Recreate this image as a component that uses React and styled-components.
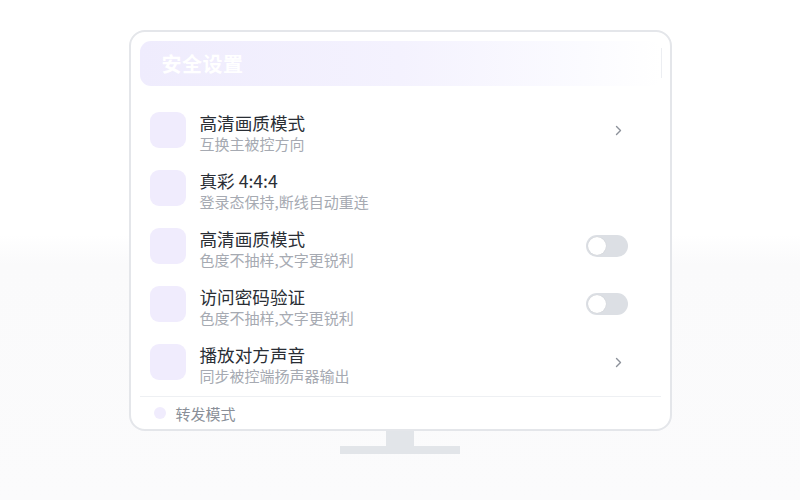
import React from "react";
import styled, { createGlobalStyle } from "styled-components";

const Global = createGlobalStyle`
  html, body { margin: 0; padding: 0; }
  body {
    width: 800px;
    height: 500px;
    overflow: hidden;
    font-family: "Noto Sans CJK SC", "Noto Sans", sans-serif;
    background: linear-gradient(to bottom, #ffffff 0px, #ffffff 235px, #fafafb 265px, #fbfbfc 500px);
  }
`;

const Page = styled.div`
  display: flex;
  flex-direction: column;
  align-items: center;
  padding-top: 30px;
`;

const Monitor = styled.div`
  box-sizing: border-box;
  width: 543px;
  height: 401px;
  border: 2px solid #e4e6ea;
  border-radius: 16px;
  background: #ffffff;
  padding: 9px 9px 0 9px;
  display: flex;
  flex-direction: column;
`;

const Header = styled.div`
  position: relative;
  height: 45px;
  border-radius: 11px;
  background: linear-gradient(90deg, #efecfd 0%, #f4f2fe 50%, #fbfbff 85%, #ffffff 100%);
  display: flex;
  align-items: center;
  padding-left: 22px;
  font-size: 20px;
  font-weight: 700;
  color: #ffffff;
  letter-spacing: 0.5px;
  &::after {
    content: "";
    position: absolute;
    right: -1px;
    top: 7px;
    bottom: 8px;
    width: 1px;
    background: #eceef2;
  }
`;

const List = styled.div`
  display: flex;
  flex-direction: column;
  gap: 16px;
  margin-top: 26px;
  padding: 0 33px 0 10px;
`;

const Row = styled.div`
  display: grid;
  grid-template-columns: 36px 1fr auto;
  column-gap: 14px;
  align-items: start;
  height: 42px;
`;

const IconBox = styled.div`
  width: 36px;
  height: 36px;
  border-radius: 9px;
  background: #f0ecfd;
`;

const Texts = styled.div`
  display: flex;
  flex-direction: column;
`;

const Title = styled.div`
  font-size: 17.6px;
  line-height: 22px;
  color: #2a2e35;
  white-space: nowrap;
`;

const Sub = styled.div`
  font-size: 15px;
  line-height: 20px;
  color: #a6aab2;
  white-space: nowrap;
`;

const Control = styled.div`
  height: 36px;
  width: 42px;
  display: flex;
  align-items: center;
  justify-content: ${(p) => (p.$end ? "flex-end" : "flex-start")};
  padding-right: ${(p) => (p.$end ? "6px" : "0")};
  box-sizing: border-box;
`;

const Toggle = styled.div`
  position: relative;
  width: 42px;
  height: 22px;
  border-radius: 11px;
  background: #dcdfe4;
  &::after {
    content: "";
    position: absolute;
    left: 2px;
    top: 2px;
    width: 18px;
    height: 18px;
    border-radius: 50%;
    background: #ffffff;
    box-shadow: 0 0 1px rgba(0, 0, 0, 0.15);
  }
`;

const Divider = styled.div`
  height: 1px;
  background: #eef0f3;
  margin-top: 10px;
`;

const Footer = styled.div`
  height: 32px;
  display: flex;
  align-items: center;
  gap: 10px;
  padding-left: 14px;
  font-size: 15px;
  color: #8a8f98;
`;

const Dot = styled.div`
  width: 12px;
  height: 12px;
  border-radius: 50%;
  background: #f0ecfd;
`;

const Neck = styled.div`
  width: 28px;
  height: 15px;
  background: #e2e5e9;
`;

const Base = styled.div`
  width: 120px;
  height: 8px;
  background: #e2e5e9;
`;

const Chevron = () => (
  <svg width="7" height="11" viewBox="0 0 7 11" fill="none">
    <polyline points="1.5,1.5 5.5,5.5 1.5,9.5" stroke="#8c919a" strokeWidth="1.4" strokeLinecap="round" strokeLinejoin="round" />
  </svg>
);

const rows = [
  { title: "高清画质模式", sub: "互换主被控方向", ctrl: "chevron" },
  { title: "真彩 4:4:4", sub: "登录态保持,断线自动重连", ctrl: null },
  { title: "高清画质模式", sub: "色度不抽样,文字更锐利", ctrl: "toggle" },
  { title: "访问密码验证", sub: "色度不抽样,文字更锐利", ctrl: "toggle" },
  { title: "播放对方声音", sub: "同步被控端扬声器输出", ctrl: "chevron" },
];

export default function App() {
  return (
    <>
      <Global />
      <Page>
        <Monitor>
          <Header>安全设置</Header>
          <List>
            {rows.map((r, i) => (
              <Row key={i}>
                <IconBox />
                <Texts>
                  <Title>{r.title}</Title>
                  <Sub>{r.sub}</Sub>
                </Texts>
                <Control $end={r.ctrl === "chevron"}>
                  {r.ctrl === "chevron" && <Chevron />}
                  {r.ctrl === "toggle" && <Toggle />}
                </Control>
              </Row>
            ))}
          </List>
          <Divider />
          <Footer>
            <Dot />
            转发模式
          </Footer>
        </Monitor>
        <Neck />
        <Base />
      </Page>
    </>
  );
}
